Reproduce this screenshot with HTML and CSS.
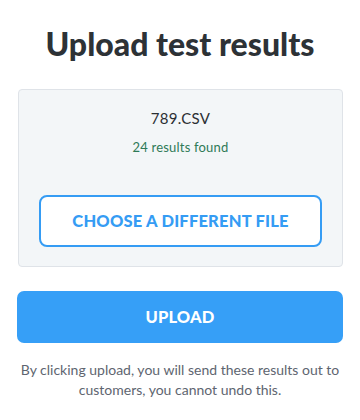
FILE: index.html
```html
<!DOCTYPE html>
<html>
<head>
<meta charset="utf-8">
<link rel="stylesheet" href="styles.css">
</head>
<body>
<main class="page">
  <h1 class="title">Upload test results</h1>
  <section class="card">
    <div class="file-name">789.CSV</div>
    <div class="file-count">24 results found</div>
    <button class="btn-outline">CHOOSE A DIFFERENT FILE</button>
  </section>
  <button class="btn-primary">UPLOAD</button>
  <p class="note">By clicking upload, you will send these results out to customers, you cannot undo this.</p>
</main>
</body>
</html>
```
FILE: styles.css
```css
* { box-sizing: border-box; }
html, body { margin: 0; padding: 0; background: #fff; }
body { font-family: Lato, "Noto Sans", sans-serif; color: #2f3437; }
.page {
  width: 360px;
  padding: 24px 17px 0 17px;
  display: flex;
  flex-direction: column;
}
.title {
  margin: 0;
  text-align: center;
  font-size: 32px;
  font-weight: 900;
  line-height: 40px;
  color: #2d3236;
}
.card {
  margin-top: 25px;
  margin-left: 1px;
  background: #f3f6f8;
  border: 1px solid #dfe3e8;
  border-radius: 4px;
  padding: 18px 20px 19px;
  display: flex;
  flex-direction: column;
  align-items: stretch;
  text-align: center;
}
.file-name {
  font-size: 15px;
  line-height: 20px;
  color: #2b2f33;
  letter-spacing: 0.3px;
}
.file-count {
  margin-top: 10px;
  font-size: 13px;
  line-height: 18px;
  letter-spacing: 0.2px;
  color: #2e7a57;
}
.btn-outline {
  margin-top: 39px;
  height: 52px;
  background: #fff;
  border: 2px solid #359cf4;
  border-radius: 8px;
  font-family: inherit;
  font-size: 16.5px;
  font-weight: 900;
  letter-spacing: 0.2px;
  color: #359cf4;
}
.btn-primary {
  margin-top: 24px;
  height: 52px;
  border: 0;
  border-radius: 7px;
  background: #369ff7;
  color: #fff;
  font-family: inherit;
  font-size: 16.5px;
  font-weight: 900;
  letter-spacing: 0.2px;
}
.note {
  margin: 17px 0 0;
  text-align: center;
  font-size: 14px;
  line-height: 20px;
  color: #5e6570;
}
```
